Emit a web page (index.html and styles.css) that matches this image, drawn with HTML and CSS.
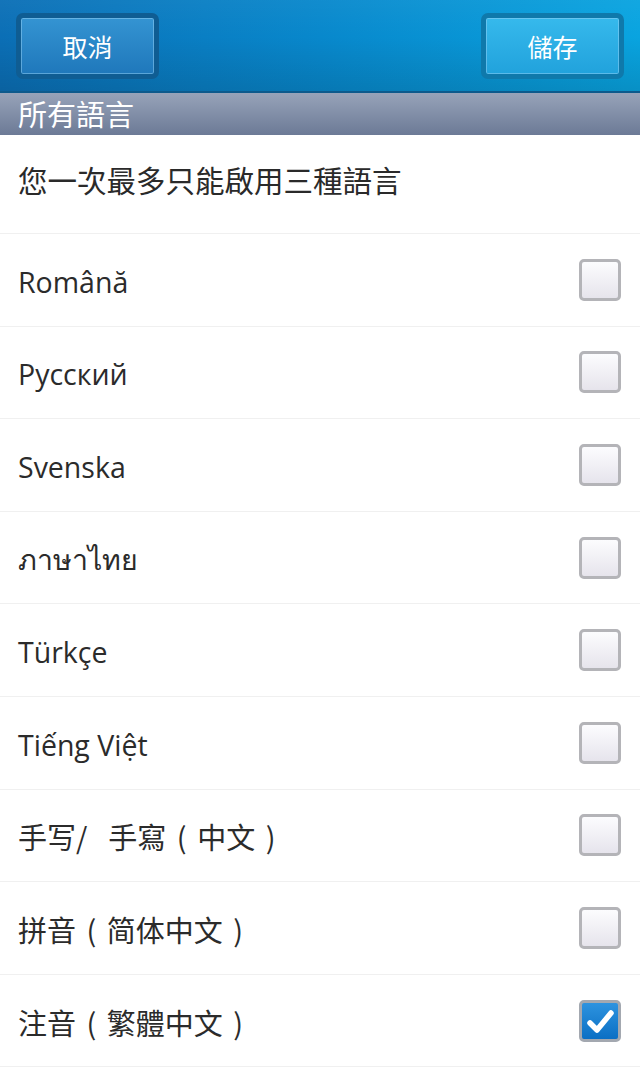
FILE: index.html
```html
<!DOCTYPE html>
<html lang="zh-Hant">

<head>
    <meta charset="UTF-8">
    <meta name="viewport" content="width=device-width, initial-scale=1.0">
    <title>所有語言</title>
    <link rel="stylesheet" href="styles.css">
</head>

<body>

    <!-- Title bar -->
    <div class="titlebar">
        <button class="bar-btn cancel">取消</button>
        <button class="bar-btn save">儲存</button>
    </div>

    <!-- Section header -->
    <div class="section">所有語言</div>

    <div class="info">您一次最多只能啟用三種語言</div>

    <ul class="langs">
        <li class="row"><span class="name">Română</span><span class="check"></span></li>
        <li class="row"><span class="name">Русский</span><span class="check"></span></li>
        <li class="row"><span class="name">Svenska</span><span class="check"></span></li>
        <li class="row"><span class="name thai">ภาษาไทย</span><span class="check"></span></li>
        <li class="row"><span class="name">Türkçe</span><span class="check"></span></li>
        <li class="row"><span class="name">Tiếng Việt</span><span class="check"></span></li>
        <li class="row"><span class="name cjk">手写/&nbsp;&nbsp;手寫 ( 中文 )</span><span class="check"></span></li>
        <li class="row"><span class="name cjk">拼音 ( 简体中文 )</span><span class="check"></span></li>
        <li class="row">
            <span class="name cjk">注音 ( 繁體中文 )</span>
            <span class="check on">
                <svg viewBox="0 0 36 36" width="36" height="36">
                    <path d="M8 20 L15 27 L29 10" fill="none" stroke="#fff" stroke-width="5.5" stroke-linecap="round" stroke-linejoin="round" />
                </svg>
            </span>
        </li>
    </ul>

</body>

</html>
```

FILE: styles.css
```css
/* Global Reset */
* {
    margin: 0;
    padding: 0;
    box-sizing: border-box;
}

body {
    font-family: 'Open Sans', 'Noto Sans', 'Noto Sans CJK TC', sans-serif;
    background: #fff;
    color: #2b2b2b;
    width: 640px;
    overflow: hidden;
}

/* Title bar */
.titlebar {
    height: 93px;
    display: flex;
    justify-content: space-between;
    align-items: flex-start;
    padding: 13px 16px 0 16px;
    background:
        linear-gradient(180deg, rgba(255, 255, 255, 0.04) 0%, rgba(0, 0, 0, 0) 40%, rgba(0, 0, 0, 0.12) 100%),
        linear-gradient(90deg, #0b6fb6 0%, #0888cc 50%, #09a4e0 100%);
    border-bottom: 2px solid #0d5a8c;
}

.bar-btn {
    width: 143px;
    height: 66px;
    border-radius: 7px;
    border: 5px solid #0f5d93;
    font-family: 'Noto Sans CJK TC', sans-serif;
    font-size: 25px;
    color: #fff;
    box-shadow: inset 0 0 0 1px rgba(150, 210, 245, 0.5);
}

.cancel {
    background: linear-gradient(180deg, #3494d2, #1f78bb);
}

.save {
    border-color: #0f79ab;
    background: linear-gradient(180deg, #36b9ec, #21a2dc);
}

/* Section header */
.section {
    height: 42px;
    padding-left: 18px;
    background: linear-gradient(180deg, #97a3b9 0%, #6c7a96 100%);
    color: #fff;
    font-family: 'Noto Sans CJK TC', sans-serif;
    font-size: 29px;
    line-height: 40px;
}

.info {
    height: 99px;
    padding: 24px 18px 0 18px;
    font-family: 'Noto Sans CJK TC', sans-serif;
    font-size: 29.5px;
    line-height: 40px;
    color: #2a2a2a;
    border-bottom: 1px solid #f0f0f0;
}

/* Language list */
.langs {
    list-style: none;
}

.row {
    height: 92.6px;
    display: flex;
    justify-content: space-between;
    align-items: center;
    padding: 0 19px 0 18px;
    border-bottom: 1px solid #f0f0f0;
}

.name {
    font-size: 28.5px;
    color: #2b2b2b;
    padding-top: 4px;
}

.cjk {
    font-family: 'Noto Sans CJK TC', sans-serif;
    font-size: 29px;
    word-spacing: 4px;
    padding-top: 2px;
}

.check {
    width: 42px;
    height: 42px;
    border: 3px solid #b4b4b8;
    border-radius: 5px;
    background: linear-gradient(180deg, #fcfcfe 0%, #e6e4ec 100%);
    display: flex;
    align-items: center;
    justify-content: center;
}

.check.on {
    border-color: #a3a8b0;
    background: linear-gradient(180deg, #2d93df 0%, #0b6fc4 100%);
}
```
